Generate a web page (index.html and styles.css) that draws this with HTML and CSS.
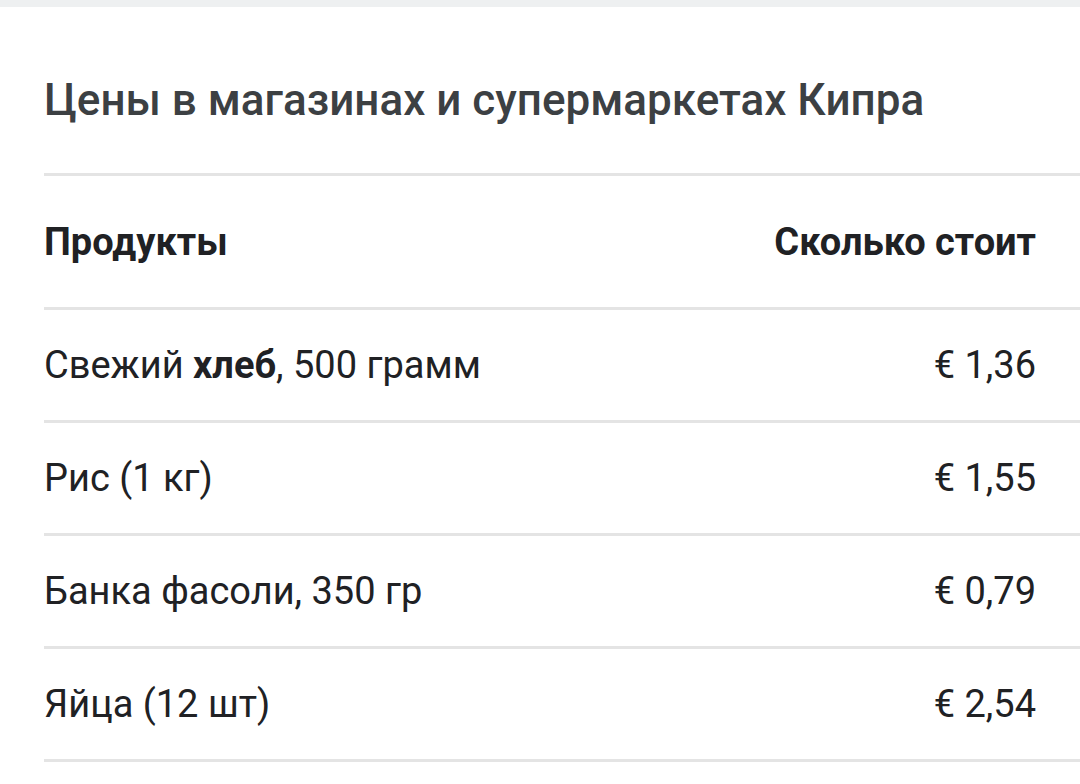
FILE: index.html
```html
<!DOCTYPE html>
<html lang="ru">
<head>
<meta charset="utf-8">
<link rel="stylesheet" href="styles.css">
</head>
<body>
<div class="topbar"></div>
<section class="card">
  <h1 class="title">Цены в магазинах и супермаркетах Кипра</h1>
  <table class="prices">
    <thead>
      <tr class="head-row">
        <th class="col-name">Продукты</th>
        <th class="col-price">Сколько стоит</th>
      </tr>
    </thead>
    <tbody>
      <tr class="row">
        <td class="col-name">Свежий <b>хлеб</b>, 500 грамм</td>
        <td class="col-price">€ 1,36</td>
      </tr>
      <tr class="row">
        <td class="col-name">Рис (1 кг)</td>
        <td class="col-price">€ 1,55</td>
      </tr>
      <tr class="row">
        <td class="col-name">Банка фасоли, 350 гр</td>
        <td class="col-price">€ 0,79</td>
      </tr>
      <tr class="row last">
        <td class="col-name">Яйца (12 шт)</td>
        <td class="col-price">€ 2,54</td>
      </tr>
    </tbody>
  </table>
</section>
</body>
</html>
```
FILE: styles.css
```css
html, body {
  margin: 0;
  padding: 0;
  background: #ffffff;
  font-family: Roboto, "Liberation Sans", sans-serif;
}

.topbar {
  height: 7px;
  background: #eef0f1;
}

.card {
  padding-left: 44px;
  background: #ffffff;
}

.title {
  margin: 0;
  padding: 69px 0 49px 0;
  font-size: 44px;
  line-height: 48px;
  font-weight: 500;
  color: #3c4043;
}

.prices {
  width: 100%;
  border-collapse: collapse;
  font-size: 38px;
  color: #202124;
}

.prices th,
.prices td {
  padding: 0;
  border-top: 3px solid #e4e4e4;
}

.prices th {
  height: 131px;
  font-weight: 700;
  color: #202124;
}

.prices td {
  height: 110px;
  font-weight: 400;
}

.prices td b {
  font-weight: 700;
}

.row.last td {
  border-bottom: 3px solid #e4e4e4;
}

.col-name {
  text-align: left;
}

.col-price {
  text-align: right;
  padding-right: 44px !important;
}
```
